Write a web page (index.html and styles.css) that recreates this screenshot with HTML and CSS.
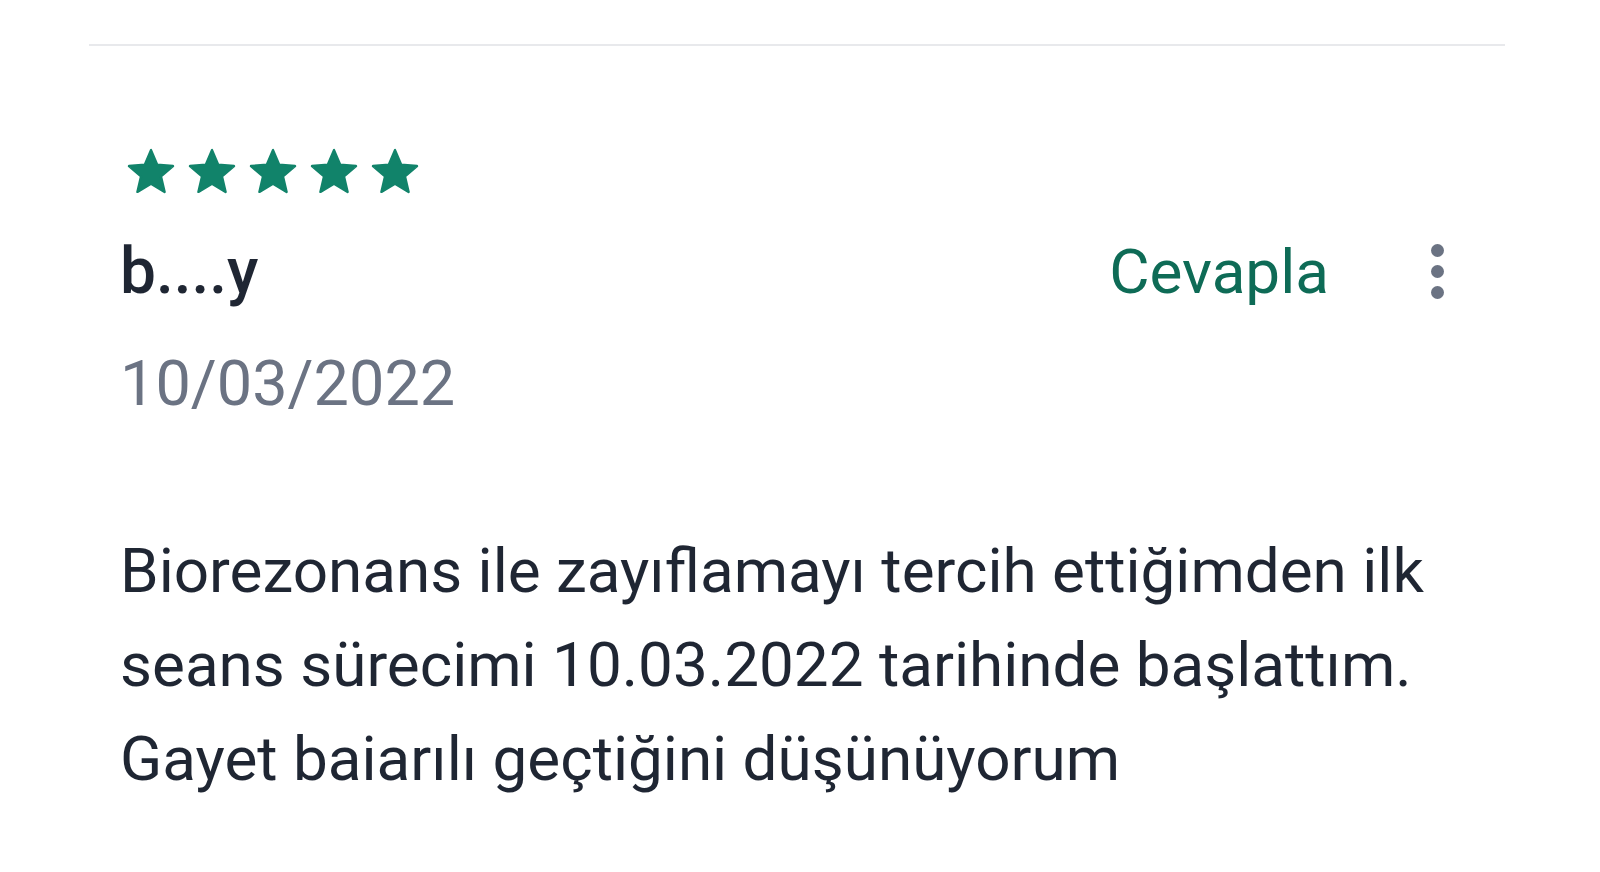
FILE: index.html
```
<!DOCTYPE html>
<html lang="tr">
<head>
  <meta charset="UTF-8" />
  <meta name="viewport" content="width=device-width, initial-scale=1.0" />
  <title>Yorum</title>
  <link rel="stylesheet" href="styles.css">
</head>
<body>
  <div class="review-list" role="main">
    <hr class="divider" />

    <div class="review">
      <div class="stars" aria-label="5 yıldız">
        <svg viewBox="2 2 20 19"><path d="M12 17.27L18.18 21l-1.64-7.03L22 9.24l-7.19-.61L12 2 9.19 8.63 2 9.24l5.46 4.73L5.82 21z"/></svg>
        <svg viewBox="2 2 20 19"><path d="M12 17.27L18.18 21l-1.64-7.03L22 9.24l-7.19-.61L12 2 9.19 8.63 2 9.24l5.46 4.73L5.82 21z"/></svg>
        <svg viewBox="2 2 20 19"><path d="M12 17.27L18.18 21l-1.64-7.03L22 9.24l-7.19-.61L12 2 9.19 8.63 2 9.24l5.46 4.73L5.82 21z"/></svg>
        <svg viewBox="2 2 20 19"><path d="M12 17.27L18.18 21l-1.64-7.03L22 9.24l-7.19-.61L12 2 9.19 8.63 2 9.24l5.46 4.73L5.82 21z"/></svg>
        <svg viewBox="2 2 20 19"><path d="M12 17.27L18.18 21l-1.64-7.03L22 9.24l-7.19-.61L12 2 9.19 8.63 2 9.24l5.46 4.73L5.82 21z"/></svg>
      </div>

      <div class="review-head">
        <span class="author">b....y</span>
        <div class="actions">
          <button class="reply-btn">Cevapla</button>
          <button class="more-btn" aria-label="Diğer">
            <span></span><span></span><span></span>
          </button>
        </div>
      </div>

      <p class="date">10/03/2022</p>

      <p class="review-text">Biorezonans ile zayıflamayı tercih ettiğimden ilk seans sürecimi 10.03.2022 tarihinde başlattım. Gayet baiarılı geçtiğini düşünüyorum</p>
    </div>
  </div>
</body>
</html>
```

FILE: styles.css
```
body {
  margin: 0;
  padding: 0;
  background-color: #fff;
  font-family: Roboto, 'Noto Sans', sans-serif;
  color: #1f2633;
}

.review-list {
  padding: 0 95px 0 89px;
}

.divider {
  margin: 44px 0 0;
  border: none;
  height: 2px;
  background-color: #e8e9ec;
}

.review {
  padding: 104px 61px 0 31px;
}

.stars {
  display: flex;
  gap: 17px;
  margin-left: 9px;
}

.stars svg {
  width: 44px;
  height: 42px;
  overflow: visible;
  fill: #11836a;
  stroke: #11836a;
  stroke-width: 1.1;
  stroke-linejoin: round;
}

.review-head {
  display: flex;
  justify-content: space-between;
  align-items: center;
  margin-top: 42px;
}

.author {
  font-size: 64px;
  font-weight: 500;
  color: #1f2633;
}

.actions {
  display: flex;
  align-items: center;
  gap: 102px;
}

.reply-btn {
  background: transparent;
  border: none;
  padding: 0;
  font-family: inherit;
  font-size: 62px;
  color: #0e6b56;
  cursor: pointer;
}

.more-btn {
  display: flex;
  flex-direction: column;
  gap: 8px;
  background: transparent;
  border: none;
  padding: 0;
  cursor: pointer;
}

.more-btn span {
  width: 13px;
  height: 13px;
  border-radius: 50%;
  background-color: #6b7383;
}

.date {
  margin: 38px 0 0;
  font-size: 63px;
  color: #6b7383;
}

.review-text {
  margin: 104px 0 0;
  font-size: 62px;
  line-height: 94px;
  color: #1f2633;
}
```
